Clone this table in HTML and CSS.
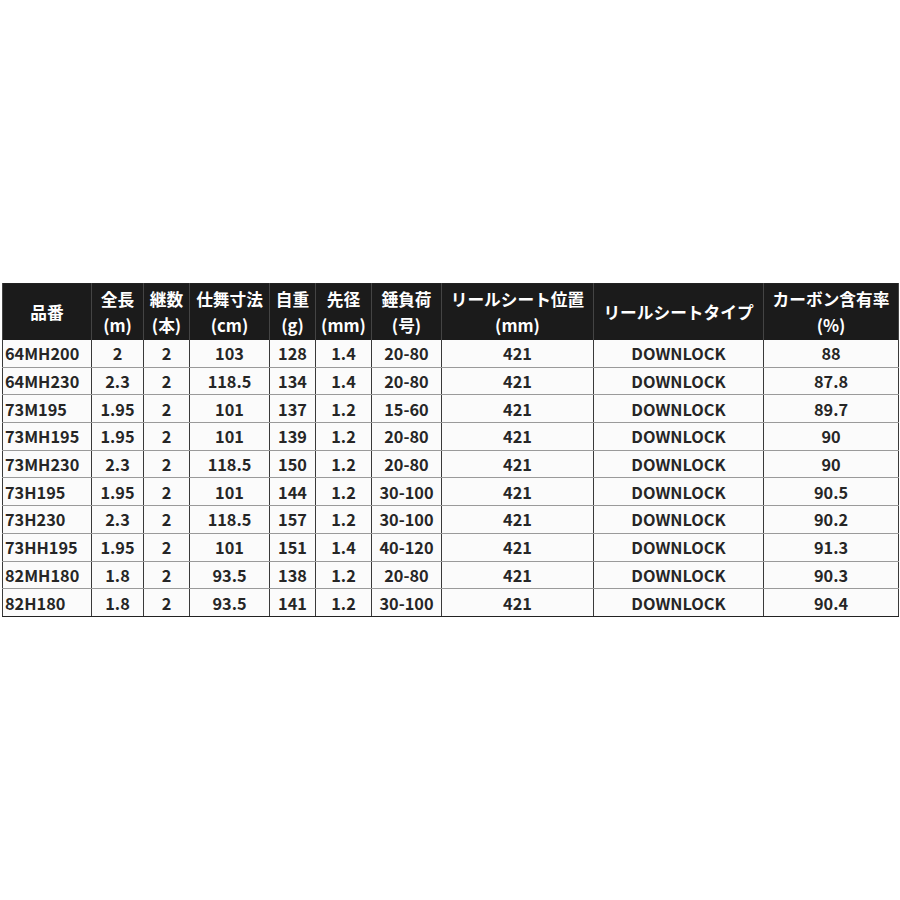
FILE: index.html
```html
<!DOCTYPE html>
<html lang="ja">
<head>
<meta charset="utf-8">
<link rel="stylesheet" href="styles.css">
</head>
<body>
<div class="wrap">
<table class="spec">
<colgroup>
<col class="c1"><col class="c2"><col class="c3"><col class="c4"><col class="c5"><col class="c6"><col class="c7"><col class="c8"><col class="c9"><col class="c10">
</colgroup>
<thead>
<tr>
<th>品番</th>
<th>全長<br>(m)</th>
<th>継数<br>(本)</th>
<th>仕舞寸法<br>(cm)</th>
<th>自重<br>(g)</th>
<th>先径<br>(mm)</th>
<th>錘負荷<br>(号)</th>
<th>リールシート位置<br>(mm)</th>
<th>リールシートタイプ</th>
<th>カーボン含有率<br>(%)</th>
</tr>
</thead>
<tbody>
<tr><td>64MH200</td><td>2</td><td>2</td><td>103</td><td>128</td><td>1.4</td><td>20-80</td><td>421</td><td>DOWNLOCK</td><td>88</td></tr>
<tr><td>64MH230</td><td>2.3</td><td>2</td><td>118.5</td><td>134</td><td>1.4</td><td>20-80</td><td>421</td><td>DOWNLOCK</td><td>87.8</td></tr>
<tr><td>73M195</td><td>1.95</td><td>2</td><td>101</td><td>137</td><td>1.2</td><td>15-60</td><td>421</td><td>DOWNLOCK</td><td>89.7</td></tr>
<tr><td>73MH195</td><td>1.95</td><td>2</td><td>101</td><td>139</td><td>1.2</td><td>20-80</td><td>421</td><td>DOWNLOCK</td><td>90</td></tr>
<tr><td>73MH230</td><td>2.3</td><td>2</td><td>118.5</td><td>150</td><td>1.2</td><td>20-80</td><td>421</td><td>DOWNLOCK</td><td>90</td></tr>
<tr><td>73H195</td><td>1.95</td><td>2</td><td>101</td><td>144</td><td>1.2</td><td>30-100</td><td>421</td><td>DOWNLOCK</td><td>90.5</td></tr>
<tr><td>73H230</td><td>2.3</td><td>2</td><td>118.5</td><td>157</td><td>1.2</td><td>30-100</td><td>421</td><td>DOWNLOCK</td><td>90.2</td></tr>
<tr><td>73HH195</td><td>1.95</td><td>2</td><td>101</td><td>151</td><td>1.4</td><td>40-120</td><td>421</td><td>DOWNLOCK</td><td>91.3</td></tr>
<tr><td>82MH180</td><td>1.8</td><td>2</td><td>93.5</td><td>138</td><td>1.2</td><td>20-80</td><td>421</td><td>DOWNLOCK</td><td>90.3</td></tr>
<tr><td>82H180</td><td>1.8</td><td>2</td><td>93.5</td><td>141</td><td>1.2</td><td>30-100</td><td>421</td><td>DOWNLOCK</td><td>90.4</td></tr>
</tbody>
</table>
</div>
</body>
</html>
```
FILE: styles.css
```css
html, body {
  margin: 0;
  padding: 0;
  background: #ffffff;
}
.wrap {
  padding: 283px 0 0 2px;
}
.spec {
  border-collapse: collapse;
  table-layout: fixed;
  width: 896px;
  font-family: "Noto Sans CJK JP", "Noto Sans", sans-serif;
  font-weight: 700;
  font-size: 16.3px;
  color: #262626;
  background: #fbfbfb;
  border: 1px solid #222;
}
.c1 { width: 89px; }
.c2 { width: 52px; }
.c3 { width: 46px; }
.c4 { width: 80px; }
.c5 { width: 46px; }
.c6 { width: 56px; }
.c7 { width: 70px; }
.c8 { width: 152px; }
.c9 { width: 170px; }
.c10 { width: 135px; }
.spec th {
  background: #1b1b1b;
  color: #ffffff;
  height: 56px;
  padding: 0;
  font-size: 16.7px;
  line-height: 26px;
  text-align: center;
  vertical-align: middle;
  border-left: 1px solid #444;
  border-right: 1px solid #444;
  font-weight: 700;
}
.spec td {
  height: 26.7px;
  padding: 0;
  line-height: 20px;
  text-align: center;
  vertical-align: middle;
  border-left: 1px solid #3a3a3a;
  border-right: 1px solid #3a3a3a;
  border-bottom: 1px solid #9a9a9a;
}
.spec td:first-child {
  text-align: left;
  padding-left: 2px;
}
.spec tbody tr:last-child td {
  border-bottom: 1px solid #222;
}
```
